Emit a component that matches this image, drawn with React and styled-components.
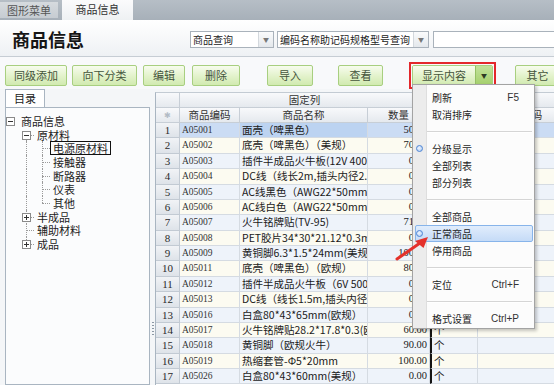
import React from "react";
import styled, { createGlobalStyle } from "styled-components";

const GlobalStyle = createGlobalStyle`
  html, body {
    margin: 0;
    padding: 0;
    background: #f4f6f8;
  }
  body {
    font-family: "Noto Sans CJK SC", "Noto Sans", sans-serif;
  }
`;

const CJK = `"Noto Sans CJK SC", "Noto Sans", sans-serif`;
const SERIF = `"Liberation Serif", "Noto Sans CJK SC", serif`;
const SANS = `"Liberation Sans", "Noto Sans CJK SC", sans-serif`;

const Screen = styled.div`
  position: relative;
  width: 554px;
  height: 385px;
  overflow: hidden;
  background: #f4f6f8;
  color: #222;
  font-family: ${CJK};
`;

/* ---------- top tabs ---------- */

const TabBar = styled.div`
  display: flex;
  align-items: flex-start;
  height: 20px;
  background: linear-gradient(#b6bec6, #a7b0b9);
`;

const Tab = styled.div`
  flex: 0 0 ${p => p.$w}px;
  margin-left: ${p => p.$gap || 0}px;
  margin-top: ${p => (p.$active ? 0 : 2)}px;
  height: ${p => (p.$active ? 20 : 16)}px;
  background: ${p =>
    p.$active ? "linear-gradient(#fbfbfc, #eef1f3)" : "linear-gradient(#d6dade, #c6ccd2)"};
  color: ${p => (p.$active ? "#333" : "#555")};
  font-size: 11px;
  line-height: ${p => (p.$active ? 18 : 16)}px;
  text-align: center;
`;

/* ---------- title band ---------- */

const TitleBand = styled.div`
  display: flex;
  align-items: center;
  box-sizing: border-box;
  height: 37px;
  padding: 2px 0 0 12px;
  background: linear-gradient(#ffffff, #eef1f4);
  border-bottom: 1px solid #c6cdd4;
`;

const Title = styled.h1`
  flex: 0 0 178px;
  margin: 0;
  font-size: 18px;
  font-weight: bold;
  line-height: 22px;
  color: #151515;
`;

const Combo = styled.div`
  display: flex;
  flex: 0 0 ${p => p.$w}px;
  margin-left: ${p => p.$gap || 0}px;
  box-sizing: border-box;
  height: 17px;
  border: 1px solid #a9b2bb;
  background: #fff;
`;

const ComboText = styled.span`
  flex: 1;
  padding-left: 2px;
  overflow: hidden;
  white-space: nowrap;
  font-size: 10px;
  line-height: 15px;
  color: #222;
`;

const ComboArrow = styled.span`
  display: flex;
  align-items: center;
  justify-content: center;
  flex: 0 0 14px;
  border-left: 1px solid #d3d8dd;
  background: linear-gradient(#fafbfc, #e4e8ec);
  color: #777;
  font-size: 6px;
`;

/* ---------- toolbar ---------- */

const Toolbar = styled.div`
  display: flex;
  align-items: center;
  box-sizing: border-box;
  height: 32px;
  padding: 5px 0 0 5px;
  background: #f8f9fb;
`;

const Button = styled.div`
  flex: 0 0 ${p => p.$w}px;
  margin-left: ${p => p.$gap || 0}px;
  box-sizing: border-box;
  height: 21px;
  border: 1px solid #a8cf80;
  border-radius: 2px;
  background: linear-gradient(#f7fcee, #e2f2ca 55%, #d1eab0);
  color: #44543b;
  font-size: 11px;
  line-height: 19px;
  text-align: center;
`;

const Frame = styled.div`
  display: flex;
  margin-left: ${p => p.$gap}px;
  padding: 1px;
  border: 2px solid #e3272b;
`;

const SplitButton = styled.div`
  display: flex;
  box-sizing: border-box;
  width: 81px;
  height: 21px;
  border: 1px solid #a8cf80;
  border-radius: 2px;
  overflow: hidden;
`;

const SplitMain = styled.span`
  flex: 1;
  background: linear-gradient(#f7fcee, #e2f2ca 55%, #d1eab0);
  color: #44543b;
  font-size: 11px;
  line-height: 19px;
  text-align: center;
`;

const SplitCaret = styled.span`
  display: flex;
  align-items: center;
  justify-content: center;
  flex: 0 0 16px;
  border-left: 1px solid #95c064;
  background: linear-gradient(#c2e29a, #a4cf6c);
  color: #2e3a24;
  font-size: 6px;
`;

/* ---------- main area ---------- */

const Main = styled.div`
  display: flex;
  height: 296px;
`;

const Side = styled.div`
  display: flex;
  flex-direction: column;
  flex: 0 0 145px;
  margin-left: 5px;
`;

const SideTab = styled.div`
  width: 40px;
  height: 18px;
  box-sizing: border-box;
  border: 1px solid #a9b5c1;
  border-bottom: none;
  background: #fff;
  font-size: 11px;
  line-height: 17px;
  text-align: center;
  color: #222;
`;

const SidePanel = styled.div`
  flex: 1;
  padding-top: 6px;
  border: 1px solid #a9b5c1;
  background: #fbfcfd;
`;

const TreeRow = styled.div`
  display: flex;
  align-items: center;
  height: 13.7px;
`;

const Guide = styled.span`
  position: relative;
  flex: 0 0 16px;
  align-self: stretch;

  &::before {
    content: "";
    display: ${p => (p.$type === "none" ? "none" : "block")};
    position: absolute;
    left: 4px;
    top: ${p => (p.$type === "start" ? "50%" : "0")};
    bottom: ${p => (p.$type === "end" ? "50%" : "0")};
    border-left: 1px dotted #9b9b9b;
  }

  &::after {
    content: "";
    display: ${p => (["tee", "end", "start"].includes(p.$type) ? "block" : "none")};
    position: absolute;
    left: 4px;
    top: 50%;
    width: 8px;
    border-top: 1px dotted #9b9b9b;
  }
`;

const Expander = styled.svg`
  position: absolute;
  left: 0px;
  top: 50%;
  margin-top: -4px;
  z-index: 1;
`;

const TreeLabel = styled.span`
  margin-left: -4px;
  padding: 0 2px;
  border: 1px solid ${p => (p.$selected ? "#111" : "transparent")};
  font-size: 11px;
  line-height: 12px;
  color: #1b1b1b;
  white-space: nowrap;
`;

const Splitter = styled.div`
  display: flex;
  flex: 0 0 5px;
  justify-content: center;
  padding-top: 233px;
`;

const Grip = styled.span`
  width: 2px;
  height: 14px;
  background: repeating-linear-gradient(#8c98a4 0 1px, transparent 1px 3px);
`;

/* ---------- grid ---------- */

const Grid = styled.div`
  flex: 1;
  margin-top: 3px;
  overflow: hidden;
  border-left: 1px solid #a9b5c1;
  border-top: 1px solid #c3cbd3;
  background: #fff;
`;

const HeadRow = styled.div`
  display: flex;
  height: 15px;
`;

const HeadCell = styled.div`
  flex: 0 0 ${p => p.$w}px;
  box-sizing: border-box;
  border-right: 1px solid #c7ced6;
  border-bottom: 1px solid #c7ced6;
  background: linear-gradient(#f8f9fb, #e5e9ee);
  color: ${p => (p.$dim ? "#b3bcc6" : "#333")};
  font-size: ${p => (p.$dim ? 8 : 10.5)}px;
  line-height: 14px;
  text-align: center;
  white-space: nowrap;
  overflow: hidden;
`;

const toneBg = {
  selected: "#cbdcf4",
  odd: "#eef3fa",
  even: "#fcfbf1",
};

const Row = styled.div`
  display: flex;
  height: 15.375px;
  background: ${p => toneBg[p.$tone]};
`;

const Cell = styled.div`
  flex: 0 0 ${p => p.$w}px;
  box-sizing: border-box;
  padding: 0 2px;
  border-right: 1px solid #d5dbe2;
  border-bottom: 1px solid #d5dbe2;
  border-left: ${p => (p.$divider ? "2px solid #141414" : "none")};
  background: ${p => (p.$focus ? "#bcd3f1" : "transparent")};
  font-family: ${p => p.$font || CJK};
  font-size: ${p => p.$size || 10.5}px;
  line-height: 14.4px;
  text-align: ${p => p.$align || "left"};
  color: ${p => p.$color || "#1a1a1a"};
  white-space: nowrap;
  overflow: hidden;
`;

const NumCell = styled.div`
  flex: 0 0 24px;
  box-sizing: border-box;
  border-right: 1px solid #c2cad3;
  border-bottom: 1px solid #c2cad3;
  background: linear-gradient(#f1f3f6, #dee3e9);
  font-family: ${SERIF};
  font-size: 11px;
  line-height: 14.4px;
  text-align: center;
  color: #2a2a2a;
`;

/* ---------- context menu ---------- */

const Menu = styled.div`
  position: absolute;
  left: 412px;
  top: 84px;
  width: 123px;
  box-sizing: border-box;
  padding: 4px 0 1px;
  border: 1px solid #a3a3a3;
  background: linear-gradient(to right, #ececec 0 13px, #dedede 13px 14px, #fcfcfc 14px);
  box-shadow: 2px 2px 3px rgba(0, 0, 0, 0.22);
  z-index: 5;
`;

const MenuItem = styled.div`
  display: flex;
  align-items: center;
  box-sizing: border-box;
  height: 17px;
  margin: 0 1px 0 2px;
  padding-right: 13px;
  border: 1px solid ${p => (p.$active ? "#87b4ea" : "transparent")};
  border-radius: 2px;
  background: ${p => (p.$active ? "linear-gradient(#e1edfc, #c5dbf7)" : "transparent")};
  font-size: 10px;
  color: #1e1e1e;
`;

const MenuSlot = styled.span`
  display: flex;
  align-items: center;
  flex: 0 0 16px;
`;

const RadioDot = styled.span`
  width: 7px;
  height: 7px;
  box-sizing: border-box;
  border: 1px solid #4d84d4;
  border-radius: 50%;
  background: radial-gradient(circle at 40% 40%, #eef5ff, #a8c7f0);
`;

const Shortcut = styled.span`
  margin-left: auto;
  font-family: ${SANS};
  font-size: 10px;
  color: #333;
`;

const MenuSep = styled.div`
  display: flex;
  align-items: center;
  height: 17px;
  margin: 0 2px 0 14px;

  &::before {
    content: "";
    flex: 1;
    border-top: 1px solid #d5d5d5;
    border-bottom: 1px solid #ffffff;
  }
`;

const Pointer = styled.svg`
  position: absolute;
  left: 390px;
  top: 228px;
  z-index: 6;
`;

/* ---------- data ---------- */

const tree = [
  { label: "商品信息", guides: ["none"], box: "-" },
  { label: "原材料", guides: ["none", "start"], box: "-" },
  { label: "电源原材料", guides: ["none", "pass", "tee"], selected: true },
  { label: "接触器", guides: ["none", "pass", "tee"] },
  { label: "断路器", guides: ["none", "pass", "tee"] },
  { label: "仪表", guides: ["none", "pass", "tee"] },
  { label: "其他", guides: ["none", "pass", "end"] },
  { label: "半成品", guides: ["none", "tee"], box: "+" },
  { label: "辅助材料", guides: ["none", "tee"] },
  { label: "成品", guides: ["none", "end"], box: "+" },
];

const goods = [
  ["A05001", "面壳（啤黑色）", "50.00"],
  ["A05002", "底壳（啤黑色）（美规）", "70.00"],
  ["A05003", "插件半成品火牛板(12V 400mA)", "0.00"],
  ["A05004", "DC线（线长2m,插头内径2.1mm）", "0.00"],
  ["A05005", "AC线黑色（AWG22*50mm,两端镀锡）", "0.00"],
  ["A05006", "AC线白色（AWG22*50mm,两端镀锡）", "0.00"],
  ["A05007", "火牛铭牌贴(TV-95)", "71.00"],
  ["A05008", "PET胶片34*30*21.12*0.3mm", "0.00"],
  ["A05009", "黄铜脚6.3*1.5*24mm(美规火牛)", "100.00"],
  ["A05011", "底壳（啤黑色）（欧规）", "80.00"],
  ["A05012", "插件半成品火牛板（6V 500mA）", "0.00"],
  ["A05013", "DC线（线长1.5m,插头内径2.1mm）", "0.00"],
  ["A05016", "白盒80*43*65mm(欧规）", "0.00"],
  ["A05017", "火牛铭牌贴28.2*17.8*0.3(欧规)", "60.00"],
  ["A05018", "黄铜脚（欧规火牛）", "90.00"],
  ["A05019", "热缩套管-Φ5*20mm", "100.00"],
  ["A05026", "白盒80*43*60mm(美规）", "0.00"],
];

const menu = [
  { label: "刷新", keys: "F5" },
  { label: "取消排序" },
  "sep",
  { label: "分级显示", radio: true },
  { label: "全部列表" },
  { label: "部分列表" },
  "sep",
  { label: "全部商品" },
  { label: "正常商品", radio: true, active: true },
  { label: "停用商品" },
  "sep",
  { label: "定位", keys: "Ctrl+F" },
  "sep",
  { label: "格式设置", keys: "Ctrl+P" },
];

const W = { num: 24, code: 60, name: 128, qty: 62, unit: 48, bar: 98 };

function ExpandBox({ sign }) {
  return (
    <Expander width="9" height="9" viewBox="0 0 9 9">
      <rect x="0.5" y="0.5" width="8" height="8" fill="#fff" stroke="#8a8a8a" />
      <line x1="2" y1="4.5" x2="7" y2="4.5" stroke="#333" />
      {sign === "+" && <line x1="4.5" y1="2" x2="4.5" y2="7" stroke="#333" />}
    </Expander>
  );
}

export default function App() {
  return (
    <Screen>
      <GlobalStyle />

      <TabBar>
        <Tab $w={58}>图形菜单</Tab>
        <Tab $w={71} $gap={4} $active>商品信息</Tab>
      </TabBar>

      <TitleBand>
        <Title>商品信息</Title>
        <Combo $w={84}>
          <ComboText>商品查询</ComboText>
          <ComboArrow>▼</ComboArrow>
        </Combo>
        <Combo $w={152} $gap={3}>
          <ComboText>编码名称助记码规格型号查询</ComboText>
          <ComboArrow>▼</ComboArrow>
        </Combo>
        <Combo $w={130} $gap={4} />
      </TitleBand>

      <Toolbar>
        <Button $w={62}>同级添加</Button>
        <Button $w={65} $gap={5}>向下分类</Button>
        <Button $w={42} $gap={6}>编辑</Button>
        <Button $w={48} $gap={7}>删除</Button>
        <Button $w={46} $gap={27}>导入</Button>
        <Button $w={45} $gap={25}>查看</Button>
        <Frame $gap={26}>
          <SplitButton>
            <SplitMain>显示内容</SplitMain>
            <SplitCaret>▼</SplitCaret>
          </SplitButton>
        </Frame>
        <Button $w={45} $gap={19}>其它</Button>
      </Toolbar>

      <Main>
        <Side>
          <SideTab>目录</SideTab>
          <SidePanel>
            {tree.map(node => (
              <TreeRow key={node.label}>
                {node.guides.map((g, i) => (
                  <Guide key={i} $type={g}>
                    {i === node.guides.length - 1 && node.box && <ExpandBox sign={node.box} />}
                  </Guide>
                ))}
                <TreeLabel $selected={node.selected}>{node.label}</TreeLabel>
              </TreeRow>
            ))}
          </SidePanel>
        </Side>

        <Splitter>
          <Grip />
        </Splitter>

        <Grid>
          <HeadRow>
            <HeadCell $w={W.num} />
            <HeadCell $w={W.code + W.name + W.qty}>固定列</HeadCell>
            <HeadCell $w={W.unit + W.bar} />
          </HeadRow>
          <HeadRow>
            <HeadCell $w={W.num} $dim>✱</HeadCell>
            <HeadCell $w={W.code}>商品编码</HeadCell>
            <HeadCell $w={W.name}>商品名称</HeadCell>
            <HeadCell $w={W.qty}>数量</HeadCell>
            <HeadCell $w={W.unit}>单位</HeadCell>
            <HeadCell $w={W.bar}>条形码</HeadCell>
          </HeadRow>

          {goods.map(([code, name, qty], i) => (
            <Row key={code} $tone={i === 0 ? "selected" : i % 2 ? "even" : "odd"}>
              <NumCell>{i + 1}</NumCell>
              <Cell $w={W.code} $font={SERIF} $size={9.5} $color="#333">{code}</Cell>
              <Cell $w={W.name} $focus={i === 0}>{name}</Cell>
              <Cell $w={W.qty} $font={SERIF} $size={10.5} $align="right">{qty}</Cell>
              <Cell $w={W.unit} $divider>个</Cell>
              <Cell $w={W.bar} />
            </Row>
          ))}
        </Grid>
      </Main>

      <Menu>
        {menu.map((item, i) =>
          item === "sep" ? (
            <MenuSep key={i} />
          ) : (
            <MenuItem key={i} $active={item.active}>
              <MenuSlot>{item.radio && <RadioDot />}</MenuSlot>
              {item.label}
              {item.keys && <Shortcut>{item.keys}</Shortcut>}
            </MenuItem>
          )
        )}
      </Menu>

      <Pointer width="44" height="40" viewBox="0 0 44 40">
        <line x1="7" y1="31" x2="30" y2="15" stroke="#e4312b" strokeWidth="3" strokeLinecap="round" />
        <polygon points="38,9 33.5,20 25,13" fill="#e4312b" />
      </Pointer>
    </Screen>
  );
}
